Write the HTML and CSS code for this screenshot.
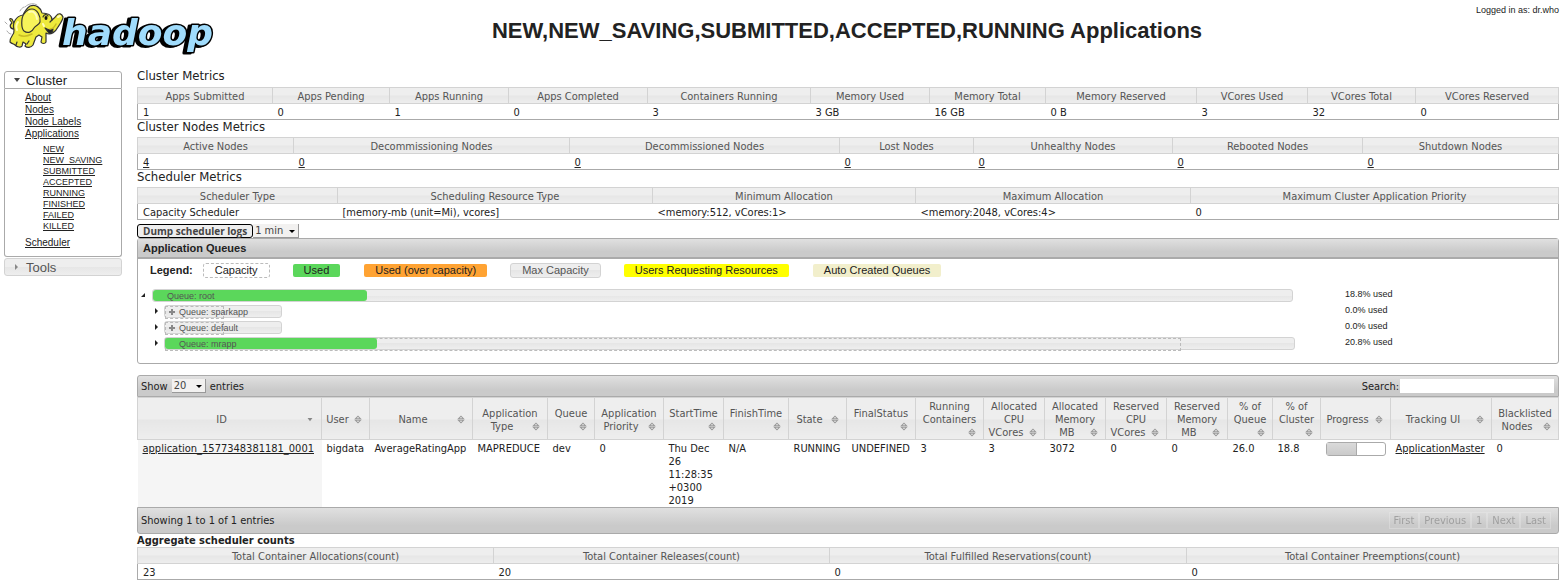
FILE: index.html
```
<!DOCTYPE html>
<html lang="en">
<head>
<meta charset="utf-8">
<title>NEW,NEW_SAVING,SUBMITTED,ACCEPTED,RUNNING Applications</title>
<link rel="stylesheet" href="styles.css">
</head>
<body>
<svg class="defs" aria-hidden="true">
  <symbol id="sort-both" viewBox="0 0 16 16"><path d="M5 7 8 4 11 7zM5 9 8 12 11 9z" fill="#eee" stroke="#999" stroke-width="1.300"/></symbol>
  <symbol id="sort-down" viewBox="0 0 16 16"><path d="M5 6h6L8 10z" fill="#888"/></symbol>
</svg>
<header class="top">
  <a class="logo" href="#" aria-label="Hadoop home">
    <svg width="214" height="56" viewBox="0 0 214 56">
      <g stroke="#333" stroke-width="1.200" stroke-linejoin="round" stroke-linecap="round">
        <path d="M14 29C10 29 9 25 12 23L10 20C9 18 12 18 13 21C15 24 13 26 16 26" fill="#e8e43a"/>
        <path d="M23 15C16 16 12 23 14 30C15 35 9 37 10 42C12 44 14 44 15 45C17 47 21 48 22 46L23 42L26 44L25 46C27 48 31 48 33 45L36 37L39 35L42 37L41 42C42 44 45 44 46 42L46 33C51 36 56 31 58 27C60 24 63 20 63 17C62 14 59 12 56 16C55 18 53 19 52 20C52 15 47 13 42 13C41 8 36 4 30 6C27 8 25 11 23 15Z" fill="#eeea3c"/>
        <path d="M24 14C21 18 21 28 24 31C28 34 32 32 34 28C36 25 39 25 40 22C41 16 37 9 32 9C28 9 26 11 24 14Z" fill="#f7f45a"/>
        <path d="M45 28C48 30 51 30 53 29C53 33 50 35 48 32Z" fill="#222"/>
        <path d="M43 17C44 14 47 14 48 16M52 20L50 22M16 45L17 42M27 44L29 41" fill="none"/>
        <path d="M25 7C29 3 34 3 37 5M20 11C21 9 22 8 24 7M5 22L7 24M7 31C8 33 10 34 11 34" fill="none" stroke="#aaa" stroke-width="1"/>
      </g>
      <ellipse cx="46" cy="18" rx="1.500" ry="2" fill="#111"/>
      <path d="M29 12C34 10 37 15 37 19M18 22C16 25 16 28 17 30M58 17L60 16M43 24L44 26" fill="none" stroke="#fffdb8" stroke-width="2" stroke-linecap="round"/>
      <path d="M19 35C23 37 28 36 32 34M56 24C54 28 52 29 50 29" fill="none" stroke="#c9bd25" stroke-width="1.500" stroke-linecap="round"/>
      <text class="logo-word" x="62" y="45">hadoop</text>
    </svg>
  </a>
  <h1>NEW,NEW_SAVING,SUBMITTED,ACCEPTED,RUNNING Applications</h1>
  <div class="user">Logged in as: dr.who</div>
</header>
<div class="page">
  <nav class="side">
    <h3 class="open"><svg width="16" height="16" viewBox="0 0 16 16"><path d="M5 6h6L8 10z" fill="#444"/></svg>Cluster</h3>
    <div class="links">
      <ul>
        <li><a href="#">About</a></li>
        <li><a href="#">Nodes</a></li>
        <li><a href="#">Node Labels</a></li>
        <li><a href="#">Applications</a>
          <ul>
            <li><a href="#">NEW</a></li>
            <li><a href="#">NEW_SAVING</a></li>
            <li><a href="#">SUBMITTED</a></li>
            <li><a href="#">ACCEPTED</a></li>
            <li><a href="#">RUNNING</a></li>
            <li><a href="#">FINISHED</a></li>
            <li><a href="#">FAILED</a></li>
            <li><a href="#">KILLED</a></li>
          </ul>
        </li>
        <li><a href="#">Scheduler</a></li>
      </ul>
    </div>
    <h3 class="closed"><svg width="16" height="16" viewBox="0 0 16 16"><path d="M6 5v6L9 8z" fill="#888"/></svg>Tools</h3>
  </nav>
  <main>
    <h2>Cluster Metrics</h2>
    <table class="info">
      <colgroup><col style="width:135px"><col style="width:117px"><col style="width:119px"><col style="width:139px"><col style="width:163px"><col style="width:119px"><col style="width:116px"><col style="width:151px"><col style="width:111px"><col style="width:108px"><col></colgroup>
      <thead><tr><th>Apps Submitted</th><th>Apps Pending</th><th>Apps Running</th><th>Apps Completed</th><th>Containers Running</th><th>Memory Used</th><th>Memory Total</th><th>Memory Reserved</th><th>VCores Used</th><th>VCores Total</th><th>VCores Reserved</th></tr></thead>
      <tbody><tr><td>1</td><td>0</td><td>1</td><td>0</td><td>3</td><td>3 GB</td><td>16 GB</td><td>0 B</td><td>3</td><td>32</td><td>0</td></tr></tbody>
    </table>
    <h2>Cluster Nodes Metrics</h2>
    <table class="info">
      <colgroup><col style="width:156px"><col style="width:276px"><col style="width:270px"><col style="width:134px"><col style="width:199px"><col style="width:190px"><col></colgroup>
      <thead><tr><th>Active Nodes</th><th>Decommissioning Nodes</th><th>Decommissioned Nodes</th><th>Lost Nodes</th><th>Unhealthy Nodes</th><th>Rebooted Nodes</th><th>Shutdown Nodes</th></tr></thead>
      <tbody><tr><td><a href="#">4</a></td><td><a href="#">0</a></td><td><a href="#">0</a></td><td><a href="#">0</a></td><td><a href="#">0</a></td><td><a href="#">0</a></td><td><a href="#">0</a></td></tr></tbody>
    </table>
    <h2>Scheduler Metrics</h2>
    <table class="info">
      <colgroup><col style="width:200px"><col style="width:315px"><col style="width:263px"><col style="width:275px"><col></colgroup>
      <thead><tr><th>Scheduler Type</th><th>Scheduling Resource Type</th><th>Minimum Allocation</th><th>Maximum Allocation</th><th>Maximum Cluster Application Priority</th></tr></thead>
      <tbody><tr><td>Capacity Scheduler</td><td>[memory-mb (unit=Mi), vcores]</td><td>&lt;memory:512, vCores:1&gt;</td><td>&lt;memory:2048, vCores:4&gt;</td><td>0</td></tr></tbody>
    </table>
    <div class="tools">
      <button type="button">Dump scheduler logs</button>
      <span class="drop period"><select aria-label="Log period"><option>1 min</option></select></span>
    </div>
    <section class="queues">
      <h3>Application Queues</h3>
      <div class="legend">
        <b>Legend:</b>
        <span class="key cap">Capacity</span>
        <span class="key used">Used</span>
        <span class="key over">Used (over capacity)</span>
        <span class="key max">Max Capacity</span>
        <span class="key request">Users Requesting Resources</span>
        <span class="key auto">Auto Created Queues</span>
      </div>
      <ul class="tree">
        <li>
          <div class="queue"><svg width="8" height="8"><path d="M5 2v4H1z" fill="#222"/></svg>
            <div class="track"><div class="bar" style="width:95.6%"><i class="fill" style="width:18.8%"></i><span>Queue: root</span></div></div>
            <em>18.8% used</em></div>
        </li>
        <li>
          <div class="queue child"><svg width="8" height="8"><path d="M2 1v6L5 4z" fill="#222"/></svg>
            <div class="track"><div class="bar" style="width:10%"><i class="limit" style="width:51%"></i><b class="plus"></b><span>Queue: sparkapp</span></div></div>
            <em>0.0% used</em></div>
        </li>
        <li>
          <div class="queue child"><svg width="8" height="8"><path d="M2 1v6L5 4z" fill="#222"/></svg>
            <div class="track"><div class="bar" style="width:10%"><i class="limit" style="width:51%"></i><b class="plus"></b><span>Queue: default</span></div></div>
            <em>0.0% used</em></div>
        </li>
        <li>
          <div class="queue child"><svg width="8" height="8"><path d="M2 1v6L5 4z" fill="#222"/></svg>
            <div class="track"><div class="bar" style="width:95.8%"><i class="limit" style="width:90%"></i><i class="fill" style="width:18.8%"></i><span>Queue: mrapp</span></div></div>
            <em>20.8% used</em></div>
        </li>
      </ul>
    </section>
    <section class="apps">
      <div class="strip head">
        <label>Show <span class="drop"><select><option>20</option></select></span> entries</label>
        <label>Search:<input type="text"></label>
      </div>
      <table class="info grid">
        <colgroup><col style="width:184px"><col style="width:48px"><col style="width:103px"><col style="width:75px"><col style="width:47px"><col style="width:69px"><col style="width:60px"><col style="width:65px"><col style="width:58px"><col style="width:69px"><col style="width:68px"><col style="width:61px"><col style="width:61px"><col style="width:61px"><col style="width:61px"><col style="width:45px"><col style="width:48px"><col style="width:70px"><col style="width:101px"><col></colgroup>
        <thead><tr>
          <th>ID<svg><use href="#sort-down"/></svg></th>
          <th>User<svg><use href="#sort-both"/></svg></th>
          <th>Name<svg><use href="#sort-both"/></svg></th>
          <th>Application Type<svg><use href="#sort-both"/></svg></th>
          <th>Queue<svg><use href="#sort-both"/></svg></th>
          <th>Application Priority<svg><use href="#sort-both"/></svg></th>
          <th>StartTime<svg><use href="#sort-both"/></svg></th>
          <th>FinishTime<svg><use href="#sort-both"/></svg></th>
          <th>State<svg><use href="#sort-both"/></svg></th>
          <th>FinalStatus<svg><use href="#sort-both"/></svg></th>
          <th>Running Containers<svg><use href="#sort-both"/></svg></th>
          <th>Allocated CPU VCores<svg><use href="#sort-both"/></svg></th>
          <th>Allocated Memory MB<svg><use href="#sort-both"/></svg></th>
          <th>Reserved CPU VCores<svg><use href="#sort-both"/></svg></th>
          <th>Reserved Memory MB<svg><use href="#sort-both"/></svg></th>
          <th>% of Queue<svg><use href="#sort-both"/></svg></th>
          <th>% of Cluster<svg><use href="#sort-both"/></svg></th>
          <th>Progress<svg><use href="#sort-both"/></svg></th>
          <th>Tracking UI<svg><use href="#sort-both"/></svg></th>
          <th>Blacklisted Nodes<svg><use href="#sort-both"/></svg></th>
        </tr></thead>
        <tbody><tr>
          <td class="sorted"><a href="#">application_1577348381181_0001</a></td>
          <td>bigdata</td><td>AverageRatingApp</td><td>MAPREDUCE</td><td>dev</td><td>0</td>
          <td>Thu Dec 26 11:28:35 +0300 2019</td><td>N/A</td><td>RUNNING</td><td>UNDEFINED</td>
          <td>3</td><td>3</td><td>3072</td><td>0</td><td>0</td><td>26.0</td><td>18.8</td>
          <td><div class="progress"><i style="width:53%"></i></div></td>
          <td><a href="#">ApplicationMaster</a></td><td>0</td>
        </tr></tbody>
      </table>
      <div class="strip foot">
        <div>Showing 1 to 1 of 1 entries</div>
        <div class="pager"><button disabled>First</button><button disabled>Previous</button><button disabled>1</button><button disabled>Next</button><button disabled>Last</button></div>
      </div>
    </section>
    <h4>Aggregate scheduler counts</h4>
    <table class="info">
      <colgroup><col style="width:356px"><col style="width:336px"><col style="width:357px"><col></colgroup>
      <thead><tr><th>Total Container Allocations(count)</th><th>Total Container Releases(count)</th><th>Total Fulfilled Reservations(count)</th><th>Total Container Preemptions(count)</th></tr></thead>
      <tbody><tr><td>23</td><td>20</td><td>0</td><td>0</td></tr></tbody>
    </table>
  </main>
</div>
</body>
</html>
```

FILE: styles.css
```
* { box-sizing: border-box; }
body {
  margin: 0;
  background: #fff;
  color: #222;
  font: 11px/13px "DejaVu Sans Condensed", "DejaVu Sans", sans-serif;
}
a { color: #222; text-decoration: underline; }
h1, h2, h3, h4, ul { margin: 0; padding: 0; }
ul { list-style: none; }
.defs { position: absolute; width: 0; height: 0; }

.top {
  display: grid;
  grid-template-columns: 214px 1fr 214px;
  height: 68px;
  font-family: "Liberation Sans", Arial, sans-serif;
}
.logo { display: block; height: 56px; }
.logo-word {
  font: italic bold 36px "DejaVu Sans", sans-serif;
  fill: #a0dcfc;
  stroke: #000;
  stroke-width: 3px;
  paint-order: stroke;
  stroke-linejoin: round;
  filter: drop-shadow(-3px 1px 0 #000);
}
h1 {
  padding: 18px 0 0 128px;
  font-size: 22px;
  line-height: 26px;
  text-align: center;
  white-space: nowrap;
}
.user { padding: 4px 7px 0 0; font-size: 9px; line-height: 12px; text-align: right; }

.page {
  display: grid;
  grid-template-columns: 118px minmax(0, 1fr);
  gap: 15px;
  padding: 0 7px 2px 4px;
}
.side { padding-top: 3px; font-family: "Liberation Sans", Arial, sans-serif; }
.side h3 {
  display: flex;
  align-items: center;
  gap: 1px;
  height: 18px;
  padding-left: 4px;
  border: 1px solid #aaa;
  border-radius: 3px;
  font-size: 13px;
  font-weight: 400;
}
.side .open { border-radius: 3px 3px 0 0; }
.side .closed {
  margin-top: 1px;
  border-color: #d3d3d3;
  background: linear-gradient(#eee 50%, #e6e6e6 50%, #eee);
  color: #555;
}
.links {
  padding: 3px 0 7px 20px;
  border: 1px solid #aaa;
  border-top: 0;
  border-radius: 0 0 3px 3px;
  font-size: 10px;
  line-height: 12px;
}
.links ul ul { padding: 4px 0 5px 18px; font-size: 9px; line-height: 11px; }

h2 { height: 17px; font-size: 13px; font-weight: 400; line-height: 14px; }
main h2:first-child { height: 19px; line-height: 16px; }
h4 { font-size: 11px; line-height: 13px; }

.info {
  width: 100%;
  table-layout: fixed;
  border-collapse: collapse;
  border: 1px solid #aaa;
}
.info th {
  padding: 2px 3px 0;
  border: 1px solid #d3d3d3;
  background: linear-gradient(#eee 50%, #e6e6e6 50%, #eee);
  color: #555;
  font-weight: 400;
}
.info td { padding: 2px 5px 0; text-align: left; vertical-align: top; }

.tools { display: flex; align-items: center; padding-top: 4px; }
.tools button {
  height: 14px;
  padding: 0 5px;
  border: 1px solid #000;
  border-radius: 3px;
  background: #eee;
  color: #444;
  font: bold 10px/10px "Open Sans", sans-serif;
}
.drop { display: inline-block; position: relative; }
.drop::after {
  content: "";
  position: absolute;
  right: 4px;
  top: 6px;
  border: 3px solid transparent;
  border-top-color: #000;
  border-bottom: 0;
}
select {
  display: block;
  width: 34px;
  height: 14px;
  padding: 0 2px;
  border: 0;
  border-right: 1px solid #999;
  border-bottom: 1px solid #999;
  background: #f2f1f0;
  color: #444;
  font: inherit;
  appearance: none;
}
.period select { width: 46px; }

.queues {
  border: 1px solid #aaa;
  border-radius: 3px;
  font-family: "Liberation Sans", Arial, sans-serif;
}
.queues h3 {
  height: 20px;
  padding-left: 5px;
  border-bottom: 2px solid #aaa;
  background: linear-gradient(#e0e0e0, #cacaca 70%);
  font-size: 11px;
  line-height: 18px;
}
.legend { display: flex; align-items: center; gap: 22px; padding: 4px 12px 0; }
.legend b { margin-right: -12px; }
.key { padding: 0 11px; border: 1px solid transparent; border-radius: 3px; line-height: 13px; }
.cap { border: 1px dashed #bbb; }
.used { background: #5bd75b; background-clip: padding-box; }
.over { background: #ffa333; background-clip: padding-box; }
.max { border-color: #d3d3d3; background: linear-gradient(#eee 50%, #e6e6e6 50%, #eee); color: #555; }
.request { background: #ff0; background-clip: padding-box; }
.auto { background: #f2efcc; background-clip: padding-box; }

.tree { padding: 9px 0 12px; font-size: 9px; }
.queue { display: flex; align-items: center; height: 16px; }
.queue svg { flex: none; margin: 0 4px 0 2px; }
.queue.child svg { margin: 0 3px 0 15px; }
.track { flex: 1; }
.queue em { width: 15%; padding-bottom: 2px; font-style: normal; }
.bar {
  position: relative;
  height: 13px;
  border: 1px solid #d3d3d3;
  border-radius: 3px;
  background: linear-gradient(#eee 50%, #e6e6e6 50%, #eee);
  color: #555;
  line-height: 13px;
}
.bar span { position: relative; padding-left: 14px; white-space: nowrap; }
.fill { position: absolute; left: 0; top: 0; height: 11px; border-radius: 3px; background: #5bd75b; }
.limit { position: absolute; left: 0; top: 0; height: 13px; border: 1px dashed #bbb; }
.plus {
  position: absolute;
  left: 4px;
  top: 3px;
  width: 6px;
  height: 6px;
  background: linear-gradient(#888, #888) center / 6px 2px no-repeat, linear-gradient(#888, #888) center / 2px 6px no-repeat;
}

.apps { margin-top: 11px; }
.strip {
  display: flex;
  justify-content: space-between;
  align-items: center;
  padding: 0 4px 0 3px;
  border: 1px solid #aaa;
  background: linear-gradient(#e0e0e0, #cacaca 70%);
}
.head { height: 22px; border-radius: 3px 3px 0 0; }
.foot { height: 27px; border-radius: 0 0 3px 3px; }
.strip label { display: flex; align-items: center; gap: 4px; }
.strip label + label { gap: 1px; }
.strip input { width: 154px; height: 14px; padding: 0 2px; border: 0; background: #fff; font: inherit; }
.grid { border: 0; }
.grid th { height: 42px; }
.grid th svg { float: right; width: 16px; height: 13px; }
.grid td { height: 67px; }
.sorted { background: #f5f5f5; }
.progress { height: 14px; border: 1px solid #aaa; border-radius: 3px; }
.progress i { display: block; height: 12px; border-right: 1px solid #aaa; background: linear-gradient(#dadada, #cacaca); }
.pager { display: flex; padding-right: 3px; }
.pager button {
  height: 17px;
  padding: 0 4px;
  border: 1px solid #eee;
  background: none;
  color: #444;
  font: inherit;
  opacity: 0.35;
}
```
